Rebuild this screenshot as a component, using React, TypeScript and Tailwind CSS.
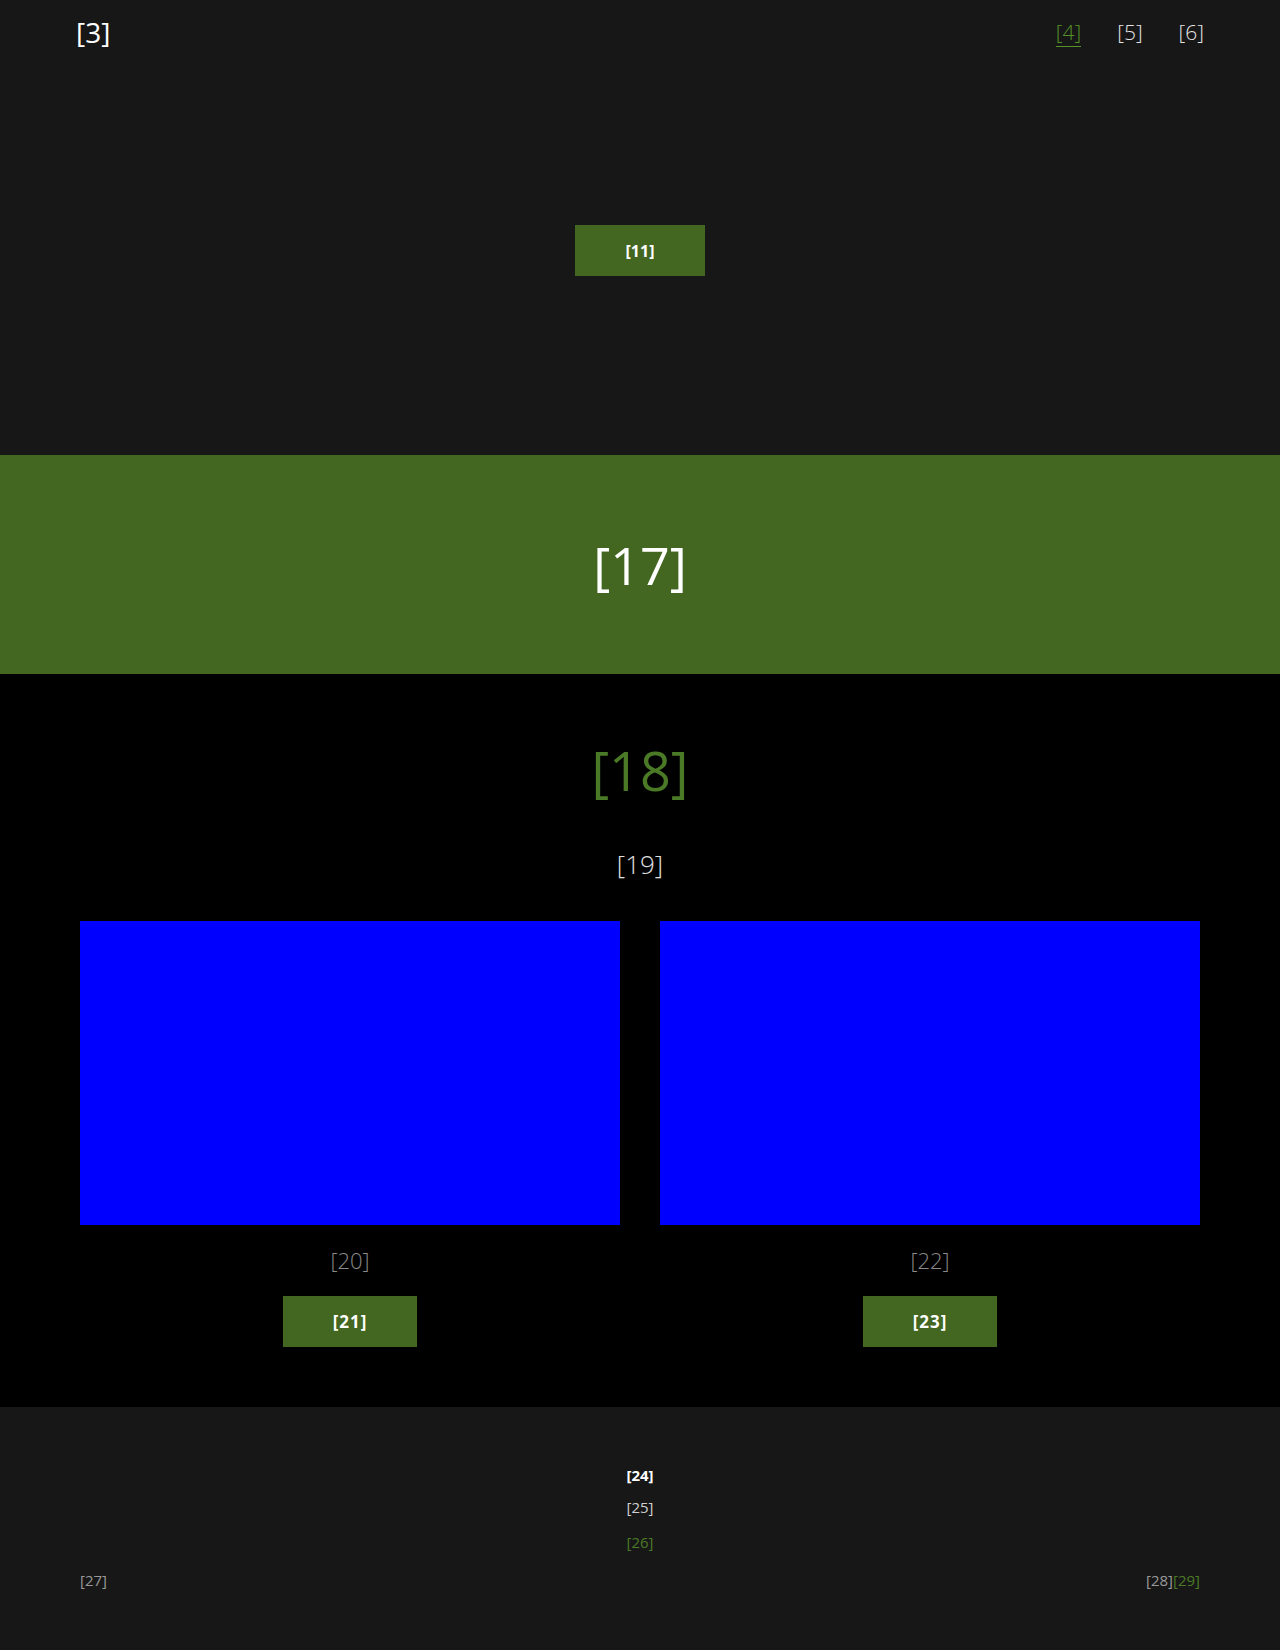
const font = { fontFamily: '"Open Sans", "Noto Sans", sans-serif' };

function Header() {
  return (
    <header className="flex items-start justify-between px-[76px] pt-[14px] h-[64px]">
      <a className="text-[28px] leading-[36px] text-white">[3]</a>
      <nav className="flex gap-[36px] pt-[4px]">
        <a className="text-[21px] leading-[28px] font-light text-[#559128] border-b border-[#559128]">[4]</a>
        <a className="text-[21px] leading-[28px] font-light text-[#e5e5e5]">[5]</a>
        <a className="text-[21px] leading-[28px] font-light text-[#e5e5e5]">[6]</a>
      </nav>
    </header>
  );
}

function Card({ caption, action }: { caption: string; action: string }) {
  return (
    <div className="flex flex-col items-center">
      <div className="w-full h-[304px] bg-[#0000ff]" />
      <p className="mt-[21px] text-[22px] leading-[28px] font-light text-[#8a8a8a]">{caption}</p>
      <button className="mt-[22px] h-[51px] px-[50px] bg-[#436620] text-white text-[17px] font-bold tracking-[1px]">
        {action}
      </button>
    </div>
  );
}

export default function App() {
  return (
    <div style={font} className="w-[1280px] min-h-[1650px] bg-[#171717]">
      <section className="h-[455px] bg-[#171717]">
        <Header />
        <div className="flex justify-center pt-[161px]">
          <button className="h-[51px] px-[51px] bg-[#436620] text-white text-[16px] font-bold">[11]</button>
        </div>
      </section>

      <section className="h-[219px] bg-[#436620] flex items-center justify-center">
        <h1 className="text-[52px] leading-[60px] text-white">[17]</h1>
      </section>

      <section className="bg-black pt-[66px] pb-[60px] px-[80px]">
        <h2 className="text-center text-[54px] leading-[60px] text-[#4b7a26]">[18]</h2>
        <p className="mt-[48px] text-center text-[26px] leading-[32px] font-light text-[#e0e0e0]">[19]</p>
        <div className="mt-[41px] grid grid-cols-2 gap-[40px]">
          <Card caption="[20]" action="[21]" />
          <Card caption="[22]" action="[23]" />
        </div>
      </section>

      <footer className="bg-[#171717] px-[80px] pt-[58px] pb-[60px]">
        <div className="flex flex-col items-center">
          <p className="text-[15px] leading-[20px] font-bold text-white">[24]</p>
          <p className="mt-[12px] text-[15px] leading-[20px] text-[#cfcfcf]">[25]</p>
          <p className="mt-[15px] text-[15px] leading-[20px] text-[#4b7a26]">[26]</p>
        </div>
        <div className="mt-[18px] flex justify-between text-[15px] leading-[20px] text-[#999999]">
          <span>[27]</span>
          <span>
            [28]<a className="text-[#4b7a26]">[29]</a>
          </span>
        </div>
      </footer>
    </div>
  );
}
